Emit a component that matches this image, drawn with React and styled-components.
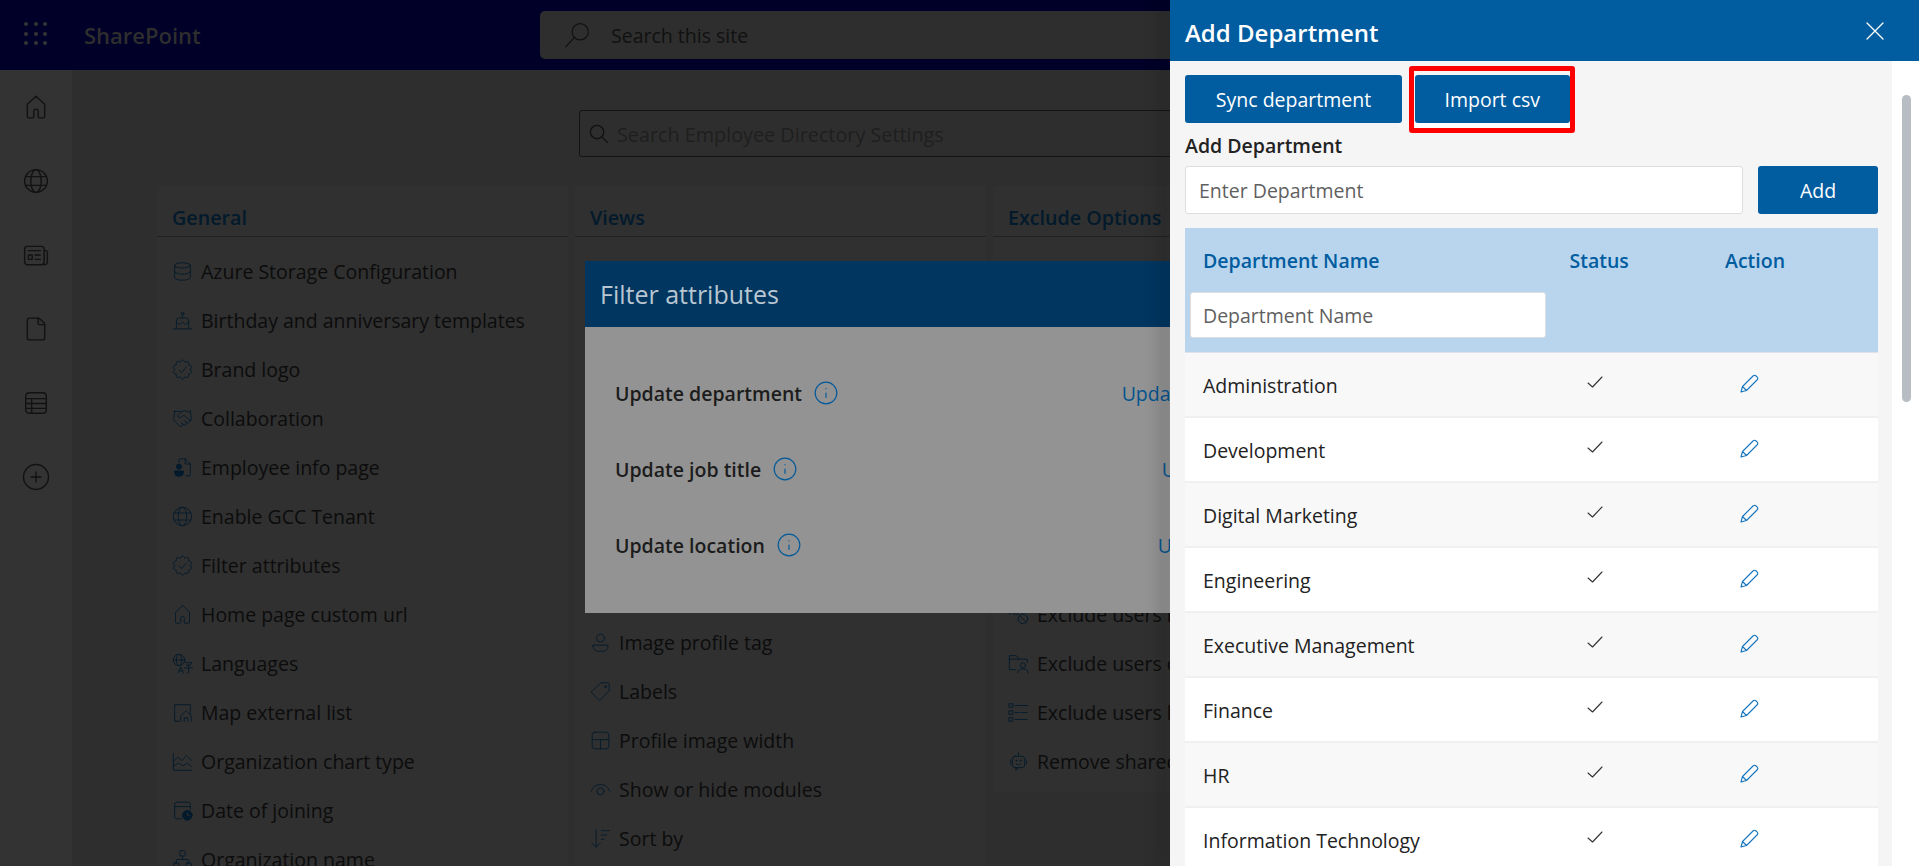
import React from "react";
import styled, { createGlobalStyle } from "styled-components";
import { Database, Handshake, Network, File, CirclePlus, Info } from "lucide-react";

const GlobalStyle = createGlobalStyle`
  html, body { margin: 0; padding: 0; height: 100%; overflow: hidden; }
  body { font-family: "Open Sans", "Liberation Sans", sans-serif; background: #2e2e2e; }
  * { box-sizing: border-box; }
`;

const Page = styled.div`
  position: relative;
  width: 1919px;
  height: 866px;
  overflow: hidden;
  color: #151515;
`;

const TopBar = styled.header`
  height: 70px;
  background: #000028;
  display: flex;
  align-items: center;
  padding-left: 24px;
`;

const Waffle = styled.div`
  width: 23px;
  margin-top: -3px;
  display: grid;
  grid-template-columns: repeat(3, 4px);
  gap: 5.5px;
  & > i { width: 4px; height: 4px; border-radius: 50%; background: #333; }
`;

const Brand = styled.div`
  margin-left: 37px;
  width: 456px;
  font-size: 22px;
  font-weight: 600;
  color: #2e2e2e;
`;

const SiteSearch = styled.div`
  width: 660px;
  height: 48px;
  background: #2e2e2e;
  border-radius: 5px;
  display: flex;
  align-items: center;
  padding-left: 24px;
  gap: 21px;
  font-size: 19.5px;
  color: #111;
`;

const Body = styled.div`
  display: flex;
  height: 796px;
`;

const Rail = styled.nav`
  width: 72px;
  background: #333;
  display: flex;
  flex-direction: column;
  align-items: center;
  padding-top: 24px;
  gap: 48px;
  color: #121212;
`;

const Main = styled.main`
  flex: 1;
  background: #2e2e2e;
  padding: 40px 0 0 85px;
`;

const SettingsSearch = styled.div`
  margin-left: 422px;
  width: 700px;
  height: 47px;
  border: 1px solid #141414;
  border-radius: 3px;
  display: flex;
  align-items: center;
  padding: 1px 0 0 7px;
  gap: 7px;
  font-size: 19.8px;
  color: #1f1f1f;
  svg { margin-top: -1px; color: #111; }
`;

const Columns = styled.div`
  display: flex;
  gap: 7.5px;
  margin-top: 29px;
  align-items: flex-start;
`;

const Column = styled.section`
  width: 410.5px;
  background: #303030;
  height: ${(p) => p.$height}px;
`;

const ColumnTitle = styled.h3`
  margin: 0;
  height: 51px;
  padding: 20px 0 0 15px;
  border-bottom: 1px solid #222;
  font-size: 19.7px;
  line-height: 24px;
  font-weight: 600;
  color: #021a2c;
`;

const ItemList = styled.ul`
  margin: ${(p) => p.$top}px 0 0;
  padding: 0 0 0 15px;
  list-style: none;
`;

const Item = styled.li`
  height: 49px;
  display: flex;
  align-items: center;
  gap: 8px;
  white-space: nowrap;
  font-size: 19.5px;
  color: #0c0c0c;
  svg { color: #021a2c; flex: none; }
`;

const FilterDialog = styled.div`
  position: absolute;
  left: 585px;
  top: 261px;
  width: 750px;
  height: 352px;
  background: #939393;
`;

const DialogHead = styled.div`
  height: 66px;
  background: #003660;
  padding-left: 15px;
  display: flex;
  align-items: center;
  font-size: 25px;
  color: #b9c6d1;
`;

const DialogRows = styled.div`
  padding: 28px 33px 0 30px;
`;

const DialogRow = styled.div`
  height: 76px;
  display: flex;
  align-items: center;
  font-size: 19.5px;
  font-weight: 600;
  color: #1c1c1c;
  svg { margin-left: 11px; color: #035a9a; flex: none; }
`;

const DialogLink = styled.span`
  margin-left: auto;
  font-weight: 400;
  color: #04548f;
`;

const Panel = styled.aside`
  position: absolute;
  left: 1170px;
  top: 0;
  width: 749px;
  height: 866px;
  overflow: hidden;
  background: #fff;
`;

const PanelShade = styled.div`
  position: absolute;
  left: 1170px;
  top: 0;
  width: 1px;
  height: 866px;
  box-shadow: -6px 0 16px 2px rgba(0, 0, 0, 0.35);
`;

const PanelHead = styled.div`
  height: 61px;
  background: #015ca0;
  color: #fff;
  display: flex;
  align-items: center;
  justify-content: space-between;
  padding: 0 35px 0 15px;
  font-size: 24px;
  font-weight: 600;
`;

const PanelTitle = styled.span`
  padding-top: 3px;
`;

const PanelBody = styled.div`
  width: 722px;
  height: 805px;
  background: #f5f5f5;
  padding: 14px 14px 0 15px;
`;

const ButtonRow = styled.div`
  display: flex;
  gap: 12.5px;
`;

const Button = styled.button`
  height: 48px;
  width: ${(p) => p.$width}px;
  flex: none;
  border: none;
  border-radius: 3px;
  background: #015ca0;
  color: #fff;
  font-family: inherit;
  font-size: 19.5px;
`;

const Highlight = styled.div`
  position: relative;
  &::before {
    content: "";
    position: absolute;
    left: 0;
    right: 0;
    top: 100%;
    height: 5px;
    background: #fff;
  }
  &::after {
    content: "";
    position: absolute;
    left: -5.5px;
    right: -5px;
    top: -9px;
    bottom: -10px;
    border: 5px solid #fe0000;
    border-radius: 3px;
    pointer-events: none;
  }
`;

const FieldLabel = styled.div`
  margin-top: 11px;
  height: 24px;
  line-height: 24px;
  font-size: 19.5px;
  font-weight: 600;
  color: #222;
`;

const AddRow = styled.div`
  display: flex;
  gap: 15px;
  margin-top: 8px;
`;

const Field = styled.div`
  flex: ${(p) => (p.$grow ? 1 : "none")};
  height: ${(p) => p.$height || 48}px;
  width: ${(p) => (p.$grow ? "auto" : "356px")};
  background: #fff;
  border: 1px solid #dedede;
  border-radius: 3px;
  display: flex;
  align-items: center;
  padding: 1px 0 0 ${(p) => p.$inset}px;
  font-size: 19.5px;
  font-weight: 400;
  color: #5f5f5f;
`;

const Table = styled.div`
  margin-top: 14px;
  width: 693px;
`;

const HeadRow = styled.div`
  height: 125px;
  background: #b9d5ed;
  display: grid;
  grid-template-columns: 379.5px 155.5px 1fr;
  grid-template-rows: 64px auto;
  padding-left: 5px;
  font-size: 19.5px;
  font-weight: 600;
  color: #015ca0;
  border-bottom: 1px solid #dde3e8;
`;

const HeadCell = styled.div`
  padding: 21px 0 0 ${(p) => p.$inset}px;
  line-height: 24px;
`;

const FilterCell = styled.div`
  grid-column: 1 / 4;
`;

const Row = styled.div`
  height: 65px;
  display: grid;
  grid-template-columns: 384.5px 155.5px 1fr;
  align-items: center;
  background: ${(p) => (p.$alt ? "#f8f8f8" : "#fff")};
  border-bottom: 2px solid #f0f0f0;
  font-size: 19.5px;
  color: #222;
`;

const NameCell = styled.div`
  padding: 1px 0 0 18px;
`;

const IconCell = styled.div`
  padding-left: ${(p) => p.$inset}px;
  display: flex;
  margin-top: ${(p) => p.$shift}px;
  color: ${(p) => p.$color};
`;

const ScrollThumb = styled.div`
  position: absolute;
  left: 732px;
  top: 95px;
  width: 9px;
  height: 307px;
  border-radius: 5px;
  background: #b7bdc2;
`;

const Glyph = ({ size = 21, sw = 1, box = "0 0 24 24", children }) => (
  <svg width={size} height={size} viewBox={box} fill="none" stroke="currentColor" strokeWidth={sw} strokeLinecap="round" strokeLinejoin="round">
    {children}
  </svg>
);

// scalloped outline for the brand logo / filter badge
const badgePath = () => {
  const teeth = 10;
  let d = "";
  for (let i = 0; i < teeth; i++) {
    const a = (i / teeth) * Math.PI * 2;
    const m = ((i + 0.5) / teeth) * Math.PI * 2;
    const b = ((i + 1) / teeth) * Math.PI * 2;
    const pt = (ang, r) => `${(12 + r * Math.cos(ang)).toFixed(2)} ${(12 + r * Math.sin(ang)).toFixed(2)}`;
    if (i === 0) d += `M${pt(a, 8.8)}`;
    d += `Q${pt(m, 13.6)} ${pt(b, 8.8)}`;
  }
  return d + "Z";
};

const BadgeIcon = () => (
  <Glyph>
    <path d={badgePath()} />
    <path d="m8 12.5 3 3 5.5-6.5" />
  </Glyph>
);

const homePath = "M12 2 4 9.5V21a1 1 0 0 0 1 1h4a1 1 0 0 0 1-1v-5a2 2 0 0 1 4 0v5a1 1 0 0 0 1 1h4a1 1 0 0 0 1-1V9.5Z";
const HomeIcon = (p) => <Glyph {...p}><path d={homePath} /></Glyph>;
const GlobeIcon = (p) => (
  <Glyph {...p}>
    <circle cx="12" cy="12" r="10.5" />
    <ellipse cx="12" cy="12" rx="4.8" ry="10.5" />
    <path d="M2.5 8h19M2.5 16h19" />
  </Glyph>
);
const NewsIcon = (p) => (
  <Glyph {...p}>
    <rect x="1.5" y="4" width="18" height="17" rx="2.5" />
    <path d="M19.5 8h1.5a1.5 1.5 0 0 1 1.5 1.5V18a3 3 0 0 1-3 3M5 8h11M11 12h5M11 16h5" />
    <rect x="5" y="12" width="3.5" height="4" />
  </Glyph>
);
const TableIcon = (p) => (
  <Glyph {...p}>
    <rect x="2.5" y="2.5" width="19" height="19" rx="3" />
    <path d="M2.5 8h19M2.5 12.5h19M2.5 17h19M8 8v13.5" />
  </Glyph>
);
const CakeIcon = () => (
  <Glyph>
    <circle cx="12" cy="4" r="1.6" />
    <path d="M12 5.6V9M5 21v-8.5A3.5 3.5 0 0 1 8.5 9h7a3.5 3.5 0 0 1 3.5 3.5V21M1.5 21.5h21M5 14l3.5 2.5L12 14l3.5 2.5L19 14" />
  </Glyph>
);
const EmployeeIcon = () => (
  <Glyph>
    <path d="M8 6V3.5A1.5 1.5 0 0 1 9.5 2H15l6 6v12a1.5 1.5 0 0 1-1.5 1.5H16M15 2v6h6" />
    <circle cx="8" cy="11" r="3" fill="currentColor" />
    <path d="M3 16h10v2a4 4 0 0 1-4 4H7a4 4 0 0 1-4-4z" fill="currentColor" />
  </Glyph>
);
const LanguageIcon = () => (
  <Glyph>
    <circle cx="8" cy="8" r="6.5" />
    <ellipse cx="8" cy="8" rx="3" ry="6.5" />
    <path d="M1.5 8h13M7 23l3-7 3 7M8 20.5h4M15 11h8l-2.5 3h-4M14 17h9.5M19 14v8l-2 1" />
  </Glyph>
);
const MapIcon = () => (
  <Glyph>
    <path d="M8 22H3V3h18v11M10 22v-6l6-6 6 6v6M14 22v-4h4v4" />
  </Glyph>
);
const ChartIcon = () => (
  <Glyph>
    <path d="M1.5 3v19h21M1.5 12l5-5 5 4 5-6 6 6M1.5 17l6-3 5 3 5-3 5 4" />
  </Glyph>
);
const DateIcon = () => (
  <Glyph>
    <path d="M11 21.5H5.5A2.5 2.5 0 0 1 3 19V5a2.5 2.5 0 0 1 2.5-2.5h13A2.5 2.5 0 0 1 21 5v6M3 7.5h18" />
    <circle cx="17.5" cy="17.5" r="5.5" fill="currentColor" />
    <path d="M17.5 14.5v3h2.5" stroke="#303030" />
  </Glyph>
);
const ProfileIcon = () => (
  <Glyph>
    <circle cx="12" cy="7" r="4.5" />
    <path d="M3.5 15h17v1.5a5.5 5.5 0 0 1-5.5 5.5H9a5.5 5.5 0 0 1-5.5-5.5z" />
  </Glyph>
);
const TagIcon = () => (
  <Glyph>
    <path d="M13 2h7a2 2 0 0 1 2 2v7L11 22.5 1.5 13z" />
    <circle cx="17.5" cy="6.5" r="1" />
  </Glyph>
);
const WidthIcon = () => (
  <Glyph>
    <rect x="2.5" y="2.5" width="19" height="19" rx="3" />
    <path d="M2.5 11h19M12 11v10.5" />
  </Glyph>
);
const EyeIcon = () => (
  <Glyph>
    <path d="M1.5 14a11 11 0 0 1 21 0" />
    <circle cx="12" cy="14" r="4" />
  </Glyph>
);
const SortIcon = () => (
  <Glyph>
    <path d="M7 2v20M2 17l5 5 5-5M13 3h9M13 8h6M13 13h3" />
  </Glyph>
);
const BlockedIcon = () => (
  <Glyph>
    <path d="M2 3c-1 3-1 6 0 9M6 4c-.7 2-.7 5 0 7M11 9a2 2 0 1 1-.1-.1" />
    <circle cx="17" cy="17" r="5.5" />
    <path d="m13 13 8 8" />
  </Glyph>
);
const FolderIcon = () => (
  <Glyph>
    <path d="M9 19H1.5V3h8l3 4H22v4M1.5 7h11" />
    <circle cx="17" cy="14" r="3" />
    <path d="M11 23c0-3 2.5-5 6-5s6 2 6 5" />
  </Glyph>
);
const ListIcon = () => (
  <Glyph>
    <rect x="1.5" y="2" width="4" height="4" />
    <rect x="1.5" y="10" width="4" height="4" />
    <rect x="1.5" y="18" width="4" height="4" />
    <path d="M8 4h14M8 12h4M14 12h8M8 20h14" />
  </Glyph>
);
const BotIcon = () => (
  <Glyph>
    <rect x="5" y="6" width="14" height="13" rx="3" />
    <path d="M12 2v4M3 10v5M21 10v5M9 19v3l3-3M9.5 15c1.5 1 3.5 1 5 0" />
    <circle cx="9.5" cy="11" r=".5" />
    <circle cx="14.5" cy="11" r=".5" />
  </Glyph>
);
const SiteSearchIcon = () => (
  <Glyph size={26} sw={1.1}>
    <circle cx="15" cy="9" r="7.5" />
    <path d="M9.5 14.5 1.5 23" />
  </Glyph>
);
const MagnifierIcon = () => (
  <Glyph size={23} sw={1.4}>
    <circle cx="10.5" cy="10.5" r="7" />
    <path d="m15.5 15.5 6 6" />
  </Glyph>
);
const CloseIcon = () => (
  <Glyph size={18} sw={1.3} box="0 0 18 18">
    <path d="M1 1l16 16M17 1 1 17" />
  </Glyph>
);
const CheckIcon = () => (
  <Glyph size={16} sw={1.1} box="0 0 16 16">
    <path d="M1 9l4.5 4L15 3" />
  </Glyph>
);
const PencilIcon = () => (
  <Glyph size={19} sw={1.1} box="0 0 19 19">
    <path d="M1 18l1.5-5.5L13 2a2.2 2.2 0 0 1 3.1 0l.9.9a2.2 2.2 0 0 1 0 3.1L6.5 16.5zM2.5 12.5l4 4" />
  </Glyph>
);

const bigIcon = { size: 26, sw: 1.3 };

const general = [
  [<Database key="i" size={21} strokeWidth={1} />, "Azure Storage Configuration"],
  [<CakeIcon key="i" />, "Birthday and anniversary templates"],
  [<BadgeIcon key="i" />, "Brand logo"],
  [<Handshake key="i" size={21} strokeWidth={1} />, "Collaboration"],
  [<EmployeeIcon key="i" />, "Employee info page"],
  [<GlobeIcon key="i" />, "Enable GCC Tenant"],
  [<BadgeIcon key="i" />, "Filter attributes"],
  [<HomeIcon key="i" />, "Home page custom url"],
  [<LanguageIcon key="i" />, "Languages"],
  [<MapIcon key="i" />, "Map external list"],
  [<ChartIcon key="i" />, "Organization chart type"],
  [<DateIcon key="i" />, "Date of joining"],
  [<Network key="i" size={21} strokeWidth={1} />, "Organization name"],
];

const views = [
  [<ProfileIcon key="i" />, "Image profile tag"],
  [<TagIcon key="i" />, "Labels"],
  [<WidthIcon key="i" />, "Profile image width"],
  [<EyeIcon key="i" />, "Show or hide modules"],
  [<SortIcon key="i" />, "Sort by"],
];

const exclude = [
  [<BlockedIcon key="i" />, "Exclude users by"],
  [<FolderIcon key="i" />, "Exclude users or"],
  [<ListIcon key="i" />, "Exclude users by"],
  [<BotIcon key="i" />, "Remove shared"],
];

const departments = [
  "Administration", "Development", "Digital Marketing", "Engineering",
  "Executive Management", "Finance", "HR", "Information Technology",
];

const attributes = ["Update department", "Update job title", "Update location"];

const Items = ({ list, top }) => (
  <ItemList $top={top}>
    {list.map(([icon, label], i) => (
      <Item key={i}>
        {icon}
        <span>{label}</span>
      </Item>
    ))}
  </ItemList>
);

export default function App() {
  return (
    <Page>
      <GlobalStyle />
      <TopBar>
        <Waffle>{Array.from({ length: 9 }, (_, i) => <i key={i} />)}</Waffle>
        <Brand>SharePoint</Brand>
        <SiteSearch>
          <SiteSearchIcon />
          Search this site
        </SiteSearch>
      </TopBar>
      <Body>
        <Rail>
          <HomeIcon {...bigIcon} />
          <GlobeIcon {...bigIcon} />
          <NewsIcon {...bigIcon} />
          <File size={26} strokeWidth={1.3} />
          <TableIcon {...bigIcon} />
          <CirclePlus size={30} strokeWidth={1.1} style={{ margin: "-2px 0" }} />
        </Rail>
        <Main>
          <SettingsSearch>
            <MagnifierIcon />
            Search Employee Directory Settings
          </SettingsSearch>
          <Columns>
            <Column $height={680}>
              <ColumnTitle>General</ColumnTitle>
              <Items list={general} top={10} />
            </Column>
            <Column $height={680}>
              <ColumnTitle>Views</ColumnTitle>
              <Items list={views} top={381} />
            </Column>
            <Column $height={606}>
              <ColumnTitle>Exclude Options</ColumnTitle>
              <Items list={exclude} top={353} />
            </Column>
          </Columns>
        </Main>
      </Body>

      <FilterDialog>
        <DialogHead>Filter attributes</DialogHead>
        <DialogRows>
          {attributes.map((a) => (
            <DialogRow key={a}>
              <span>{a}</span>
              <Info size={26} strokeWidth={1.1} />
              <DialogLink>{a}</DialogLink>
            </DialogRow>
          ))}
        </DialogRows>
      </FilterDialog>

      <PanelShade />
      <Panel>
        <PanelHead>
          <PanelTitle>Add Department</PanelTitle>
          <CloseIcon />
        </PanelHead>
        <PanelBody>
          <ButtonRow>
            <Button $width={217}>Sync department</Button>
            <Highlight><Button $width={155.5}>Import csv</Button></Highlight>
          </ButtonRow>
          <FieldLabel>Add Department</FieldLabel>
          <AddRow>
            <Field $grow $inset={13}>Enter Department</Field>
            <Button $width={120}>Add</Button>
          </AddRow>
          <Table>
            <HeadRow>
              <HeadCell $inset={13}>Department Name</HeadCell>
              <HeadCell $inset={0}>Status</HeadCell>
              <HeadCell $inset={0}>Action</HeadCell>
              <FilterCell><Field $height={46} $inset={12}>Department Name</Field></FilterCell>
            </HeadRow>
            {departments.map((d, i) => (
              <Row key={d} $alt={i % 2 === 0}>
                <NameCell>{d}</NameCell>
                <IconCell $inset={17} $shift={-6} $color="#333"><CheckIcon /></IconCell>
                <IconCell $inset={15} $shift={-3} $color="#1474bd"><PencilIcon /></IconCell>
              </Row>
            ))}
          </Table>
        </PanelBody>
        <ScrollThumb />
      </Panel>
    </Page>
  );
}
